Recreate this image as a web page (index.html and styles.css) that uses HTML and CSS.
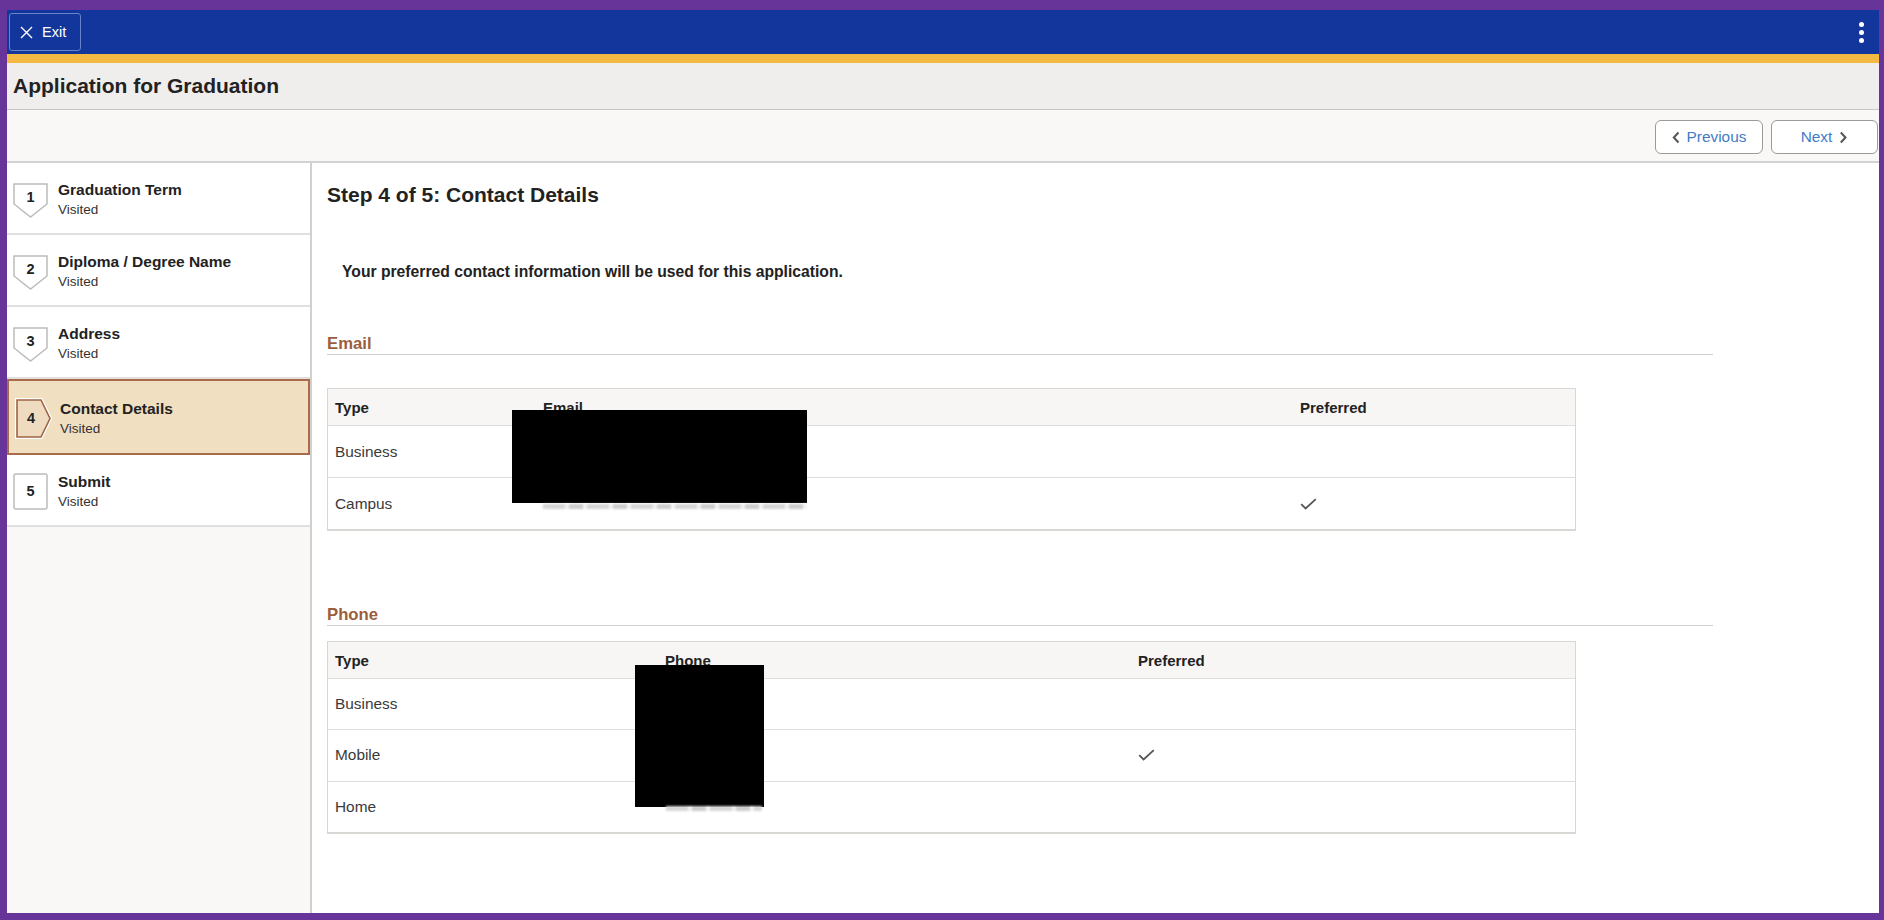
FILE: index.html
```html
<!DOCTYPE html>
<html lang="en">
<head>
<meta charset="utf-8">
<title>Application for Graduation</title>
<link rel="stylesheet" href="styles.css">
</head>
<body>
<div class="app">
  <header class="topbar">
    <button class="exit-btn" type="button">
      <svg class="exit-icon" width="13" height="13" viewBox="0 0 13 13"><path d="M1 1 L12 12 M12 1 L1 12" stroke="#fff" stroke-width="1.4" fill="none"/></svg>
      <span>Exit</span>
    </button>
    <div class="kebab"><i></i><i></i><i></i></div>
  </header>

  <div class="title-bar">
    <h1>Application for Graduation</h1>
  </div>

  <div class="toolbar">
    <button class="nav-btn" type="button">
      <svg width="8" height="13" viewBox="0 0 8 13"><path d="M6.5 1.5 L1.8 6.5 L6.5 11.5" stroke="#555" stroke-width="2" fill="none"/></svg>
      <span>Previous</span>
    </button>
    <button class="nav-btn next" type="button">
      <span>Next</span>
      <svg width="9" height="13" viewBox="0 0 9 13"><path d="M1.8 1.5 L6.5 6.5 L1.8 11.5" stroke="#555" stroke-width="2" fill="none"/></svg>
    </button>
  </div>

  <div class="main">
    <nav class="steps">
      <div class="step">
        <div class="badge">
          <svg class="badge-shape" width="35" height="35" viewBox="0 0 35 35"><polygon points="1,1 34,1 34,21 17.5,34 1,21" fill="#fff" stroke="#bcbcbc" stroke-width="1.5"/></svg>
          <span class="badge-num">1</span>
        </div>
        <div class="step-text">
          <span class="step-title">Graduation Term</span>
          <span class="step-status">Visited</span>
        </div>
      </div>
      <div class="step">
        <div class="badge">
          <svg class="badge-shape" width="35" height="35" viewBox="0 0 35 35"><polygon points="1,1 34,1 34,21 17.5,34 1,21" fill="#fff" stroke="#bcbcbc" stroke-width="1.5"/></svg>
          <span class="badge-num">2</span>
        </div>
        <div class="step-text">
          <span class="step-title">Diploma / Degree Name</span>
          <span class="step-status">Visited</span>
        </div>
      </div>
      <div class="step">
        <div class="badge">
          <svg class="badge-shape" width="35" height="35" viewBox="0 0 35 35"><polygon points="1,1 34,1 34,21 17.5,34 1,21" fill="#fff" stroke="#bcbcbc" stroke-width="1.5"/></svg>
          <span class="badge-num">3</span>
        </div>
        <div class="step-text">
          <span class="step-title">Address</span>
          <span class="step-status">Visited</span>
        </div>
      </div>
      <div class="step active">
        <div class="badge badge-current">
          <svg class="badge-shape" width="35" height="39" viewBox="0 0 35 39"><polygon points="1,1 25,1 34,19.5 25,38 1,38" fill="none" stroke="#fff" stroke-width="4"/><polygon points="1,1 25,1 34,19.5 25,38 1,38" fill="#efdcc0" stroke="#9e6444" stroke-width="1.6"/></svg>
          <span class="badge-num">4</span>
        </div>
        <div class="step-text">
          <span class="step-title">Contact Details</span>
          <span class="step-status">Visited</span>
        </div>
      </div>
      <div class="step">
        <div class="badge badge-square">
          <svg class="badge-shape" width="35" height="37" viewBox="0 0 35 37"><rect x="1" y="1" width="33" height="35" rx="1.5" fill="#fff" stroke="#bcbcbc" stroke-width="1.5"/></svg>
          <span class="badge-num">5</span>
        </div>
        <div class="step-text">
          <span class="step-title">Submit</span>
          <span class="step-status">Visited</span>
        </div>
      </div>
    </nav>

    <section class="content">
      <h2 class="page-title">Step 4 of 5: Contact Details</h2>
      <p class="intro">Your preferred contact information will be used for this application.</p>

      <div class="section">
        <h3 class="section-label">Email</h3>
        <div class="tbl tbl-email">
          <div class="tr thead"><div class="th">Type</div><div class="th">Email</div><div class="th">Preferred</div></div>
          <div class="tr"><div class="td">Business</div><div class="td"></div><div class="td"></div></div>
          <div class="tr"><div class="td">Campus</div><div class="td"></div><div class="td">
            <svg class="check" width="17" height="12" viewBox="0 0 17 12"><path d="M1.2 6.2 L5.6 10.4 L15.8 1.2" stroke="#555" stroke-width="1.8" fill="none"/></svg>
          </div></div>
          <div class="redact redact-email"></div>
          <div class="smudge smudge-email"></div>
        </div>
      </div>

      <div class="section">
        <h3 class="section-label phone-label">Phone</h3>
        <div class="tbl tbl-phone">
          <div class="tr thead"><div class="th">Type</div><div class="th">Phone</div><div class="th">Preferred</div></div>
          <div class="tr"><div class="td">Business</div><div class="td"></div><div class="td"></div></div>
          <div class="tr"><div class="td">Mobile</div><div class="td"></div><div class="td">
            <svg class="check" width="17" height="12" viewBox="0 0 17 12"><path d="M1.2 6.2 L5.6 10.4 L15.8 1.2" stroke="#555" stroke-width="1.8" fill="none"/></svg>
          </div></div>
          <div class="tr"><div class="td">Home</div><div class="td"></div><div class="td"></div></div>
          <div class="redact redact-phone"></div>
          <div class="smudge smudge-phone"></div>
        </div>
      </div>
    </section>
  </div>
</div>
</body>
</html>
```

FILE: styles.css
```css
html, body {
  margin: 0;
  padding: 0;
}

body {
  background: #673599;
  padding: 10px 5px 7px 7px;
  height: 920px;
  box-sizing: border-box;
  font-family: "Liberation Sans", Arial, sans-serif;
  color: #222;
}

.app {
  height: 903px;
  display: flex;
  flex-direction: column;
  background: #fff;
  overflow: hidden;
}

/* Top blue bar */
.topbar {
  flex: none;
  height: 44px;
  background: #13369d;
  border-bottom: 9px solid #f4b942;
  display: flex;
  align-items: center;
  justify-content: space-between;
  padding: 0 15px 0 2px;
}

.exit-btn {
  height: 38px;
  width: 72px;
  box-sizing: border-box;
  border: 1px solid #6983c4;
  border-radius: 3px;
  background: transparent;
  color: #fff;
  font-family: "Liberation Sans", Arial, sans-serif;
  font-size: 14.5px;
  display: flex;
  align-items: center;
  gap: 9px;
  padding: 0 0 0 10px;
}

.exit-icon {
  flex: none;
}

.kebab {
  display: flex;
  flex-direction: column;
  gap: 3px;
}

.kebab i {
  display: block;
  width: 5px;
  height: 5px;
  border-radius: 50%;
  background: #fff;
}

/* Title bar */
.title-bar {
  flex: none;
  height: 46px;
  background: #efeeec;
  border-bottom: 1px solid #c9c7c5;
  display: flex;
  align-items: center;
  padding-left: 6px;
}

.title-bar h1 {
  margin: 0;
  font-size: 21px;
  font-weight: bold;
  color: #222;
}

/* Toolbar */
.toolbar {
  flex: none;
  height: 53px;
  box-sizing: border-box;
  background: #f9f8f7;
  border-bottom: 2px solid #d4d2d0;
  display: flex;
  justify-content: flex-end;
  align-items: flex-start;
  gap: 8px;
  padding: 10px 1px 0 0;
}

.nav-btn {
  width: 108px;
  height: 34px;
  box-sizing: border-box;
  background: #fff;
  border: 1px solid #9a9a9a;
  border-radius: 6px;
  display: flex;
  align-items: center;
  justify-content: center;
  gap: 7px;
  padding: 0;
  color: #3f7cc4;
  font-family: "Liberation Sans", Arial, sans-serif;
  font-size: 15.4px;
}

.nav-btn.next {
  width: 107px;
}

/* Main area */
.main {
  flex: 1;
  display: flex;
  min-height: 0;
}

.steps {
  flex: none;
  width: 303px;
  background: #f9f8f7;
  border-right: 2px solid #d2d0ce;
}

.step {
  height: 72px;
  box-sizing: border-box;
  background: #fff;
  border-bottom: 2px solid #e2e0de;
  display: flex;
  align-items: flex-start;
  gap: 10px;
  padding: 18px 0 0 6px;
}

.step.active {
  height: 76px;
  background: #f1dfc1;
  border: 2px solid #a86b4b;
  padding: 19px 0 0 7px;
  gap: 9px;
}

.badge {
  position: relative;
  flex: none;
  width: 35px;
  height: 35px;
  margin-top: 2px;
  display: flex;
  justify-content: center;
  align-items: flex-start;
}

.badge-shape {
  position: absolute;
  left: 0;
  top: 0;
  overflow: visible;
}

.badge-num {
  position: relative;
  font-size: 14.5px;
  line-height: 16px;
  font-weight: bold;
  color: #222;
  padding-top: 6px;
}

.badge-square {
  height: 37px;
  margin-top: 0;
}

.badge-square .badge-num {
  padding-top: 10px;
}

.badge-current {
  height: 39px;
  margin-top: -1px;
  justify-content: flex-start;
}

.badge-current .badge-num {
  padding: 11px 0 0 11px;
}

.step-text {
  display: flex;
  flex-direction: column;
}

.step-title {
  font-size: 15.5px;
  line-height: 18px;
  font-weight: bold;
  color: #222;
}

.step-status {
  font-size: 13.5px;
  line-height: 16px;
  color: #333;
  margin-top: 3px;
}

/* Content */
.content {
  flex: 1;
  padding: 19px 0 0 15px;
  background: #fff;
}

.page-title {
  margin: 0;
  font-size: 21px;
  line-height: 25px;
  font-weight: bold;
  color: #222;
}

.intro {
  margin: 55px 0 0 15px;
  font-size: 15.7px;
  line-height: 20px;
  font-weight: bold;
  color: #222;
}

.section {
  width: 1386px;
}

.section-label {
  margin: 51px 0 0 0;
  font-size: 16.7px;
  line-height: 21px;
  font-weight: bold;
  color: #9b5e3d;
  border-bottom: 1px solid #d3d1ce;
}

.section-label.phone-label {
  margin-top: 73px;
}

.tbl {
  position: relative;
  width: 1247px;
  margin-top: 33px;
  border: 1px solid #d9d7d4;
  border-bottom-width: 2px;
}

.tbl-phone {
  margin-top: 15px;
}

.tr {
  display: grid;
  height: 51px;
  align-items: center;
  border-top: 1px solid #e0dedb;
}

.tbl-phone .tr {
  height: 50.3px;
}

.tr.thead,
.tbl-phone .tr.thead {
  height: 36px;
  border-top: none;
  background: #f7f6f4;
}

.tbl-email .tr {
  grid-template-columns: 208px 757px 1fr;
}

.tbl-phone .tr {
  grid-template-columns: 330px 473px 1fr;
}

.th {
  padding-left: 7px;
  font-size: 15px;
  font-weight: bold;
  color: #222;
}

.td {
  padding-left: 7px;
  font-size: 15.4px;
  color: #3a3a3a;
  display: flex;
  align-items: center;
}

.check {
  display: block;
}

/* Redaction overlays from the screenshot */
.redact {
  position: absolute;
  background: #000;
}

.redact-email {
  left: 184px;
  top: 21px;
  width: 295px;
  height: 93px;
}

.redact-phone {
  left: 307px;
  top: 23px;
  width: 129px;
  height: 142px;
}

.smudge {
  position: absolute;
  height: 5px;
  background: repeating-linear-gradient(90deg, #d6d6d6 0 22px, #f0f0f0 22px 26px, #cccccc 26px 40px, #f4f4f4 40px 44px);
  filter: blur(1.2px);
}

.smudge-email {
  left: 215px;
  top: 115px;
  width: 264px;
}

.smudge-phone {
  left: 338px;
  top: 164px;
  width: 96px;
}
```
